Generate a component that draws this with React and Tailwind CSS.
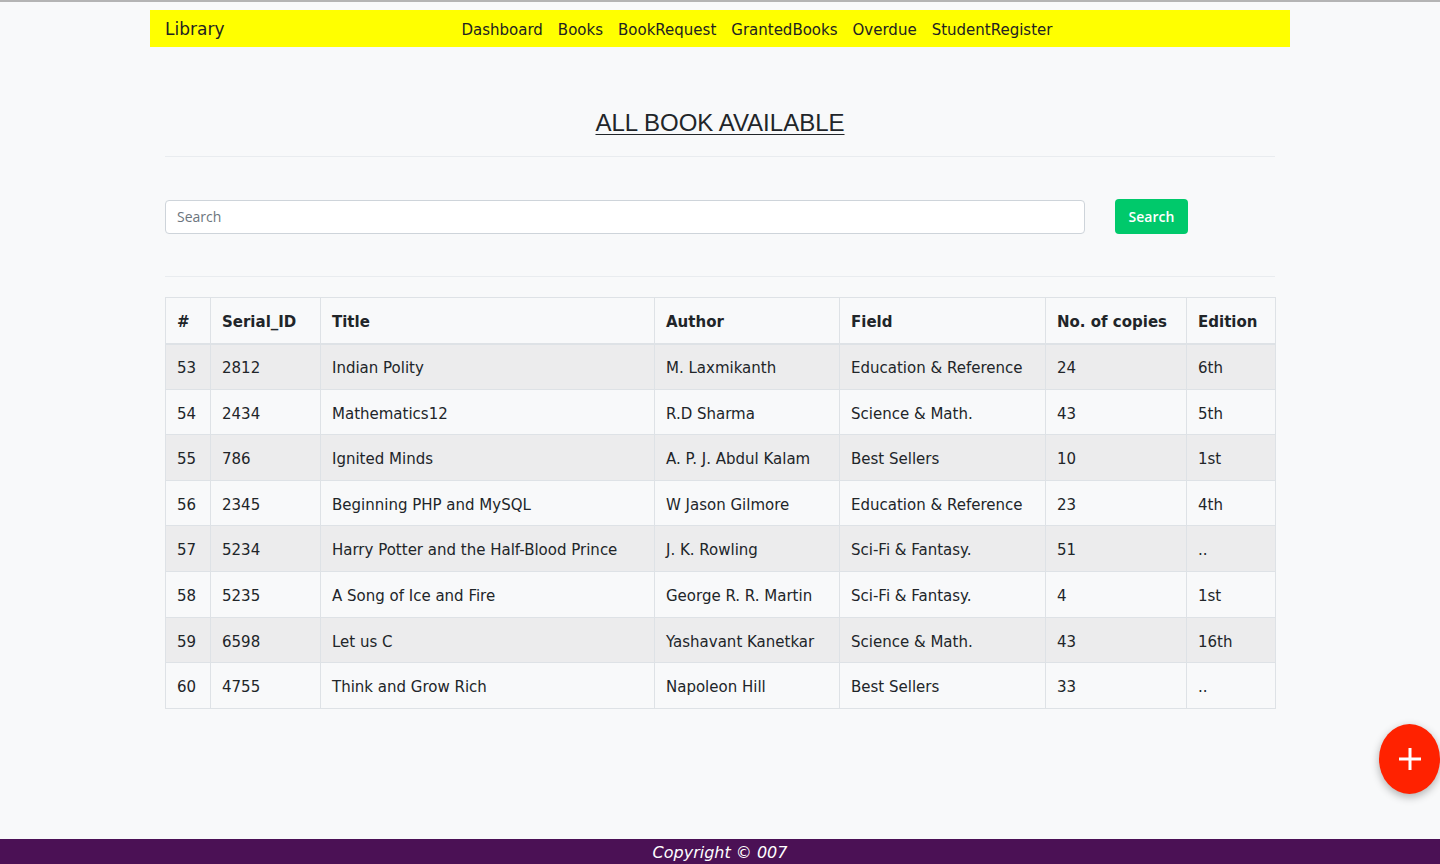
import React from "react";

const rows = [
  ["53", "2812", "Indian Polity", "M. Laxmikanth", "Education & Reference", "24", "6th"],
  ["54", "2434", "Mathematics12", "R.D Sharma", "Science & Math.", "43", "5th"],
  ["55", "786", "Ignited Minds", "A. P. J. Abdul Kalam", "Best Sellers", "10", "1st"],
  ["56", "2345", "Beginning PHP and MySQL", "W Jason Gilmore", "Education & Reference", "23", "4th"],
  ["57", "5234", "Harry Potter and the Half-Blood Prince", "J. K. Rowling", "Sci-Fi & Fantasy.", "51", ".."],
  ["58", "5235", "A Song of Ice and Fire", "George R. R. Martin", "Sci-Fi & Fantasy.", "4", "1st"],
  ["59", "6598", "Let us C", "Yashavant Kanetkar", "Science & Math.", "43", "16th"],
  ["60", "4755", "Think and Grow Rich", "Napoleon Hill", "Best Sellers", "33", ".."],
];

const headers = ["#", "Serial_ID", "Title", "Author", "Field", "No. of copies", "Edition"];
const widths = ["w-[45px]", "w-[110px]", "w-[334px]", "w-[185px]", "w-[206px]", "w-[141px]", "w-[89px]"];

export default function App() {
  return (
    <div className="relative min-h-[864px] bg-[#f8f9fa] text-[#212529] overflow-hidden" style={{ fontFamily: '"DejaVu Sans", sans-serif' }}>
      <div className="h-[2px] bg-[#b4b4b4]" />
      <div className="px-[150px] pt-[8px]">
        <nav className="flex items-center h-[37px] bg-[#ffff00] px-[15px] pt-[3px]">
          <span className="text-[17px] text-[#222]">Library</span>
          <div className="flex items-center gap-[15px] ml-[237px] text-[15px] text-[#222]">
            <span>Dashboard</span>
            <span>Books</span>
            <span>BookRequest</span>
            <span>GrantedBooks</span>
            <span>Overdue</span>
            <span>StudentRegister</span>
          </div>
        </nav>
      </div>

      <div className="mx-[165px]">
        <div className="pt-[61px] pb-[18px] flex justify-center">
          <h1 className="text-[24px] leading-[30px] underline underline-offset-[3px] decoration-1 text-[#212529]" style={{ fontFamily: '"Liberation Sans", Arial, sans-serif' }}>
            ALL BOOK AVAILABLE
          </h1>
        </div>
        <div className="h-px bg-[#e9ecef]" />

        <div className="flex items-center pt-[42px] pb-[42px]">
          <div className="w-[920px] h-[34px] bg-white border border-[#ced4da] rounded-[4px] flex items-center px-[11px] text-[14px] text-[#6c757d]" style={{ fontFamily: '"Open Sans", sans-serif' }}>
            Search
          </div>
          <button className="ml-[30px] w-[73px] h-[35px] bg-[#00c96b] rounded-[4px] text-white text-[14px] font-semibold" style={{ fontFamily: '"Open Sans", sans-serif' }}>
            Search
          </button>
        </div>
        <div className="h-px bg-[#e9ecef]" />

        <table className="mt-[20px] w-[1110px] border-collapse text-[15px] table-fixed">
          <thead>
            <tr className="h-[46px]">
              {headers.map((h, i) => (
                <th key={h} className={`${widths[i]} border border-[#dee2e6] border-b-2 pl-[11px] pr-[12px] pt-[4px] text-left font-bold`}>
                  {h}
                </th>
              ))}
            </tr>
          </thead>
          <tbody>
            {rows.map((r, ri) => (
              <tr key={r[0]} className={`h-[45.6px] ${ri % 2 === 0 ? "bg-[#ececed]" : ""}`}>
                {r.map((c, ci) => (
                  <td key={ci} className="border border-[#dee2e6] pl-[11px] pr-[12px] pt-[4px] text-left whitespace-nowrap">
                    {c}
                  </td>
                ))}
              </tr>
            ))}
          </tbody>
        </table>
      </div>

      <div className="absolute right-0 top-[724px] w-[61px] h-[70px] rounded-[50%] bg-[#ff2200] shadow-[0_3px_8px_rgba(0,0,0,0.3)] flex items-center justify-center">
        <svg width="24" height="24" viewBox="0 0 24 24">
          <path d="M12 1v22M1 12h22" stroke="white" strokeWidth="3" />
        </svg>
      </div>

      <footer className="absolute left-0 right-0 bottom-0 h-[25px] bg-[#4b1155] flex items-center justify-center pt-[3px]">
        <span className="italic text-white text-[16px]">Copyright © 007</span>
      </footer>
    </div>
  );
}
